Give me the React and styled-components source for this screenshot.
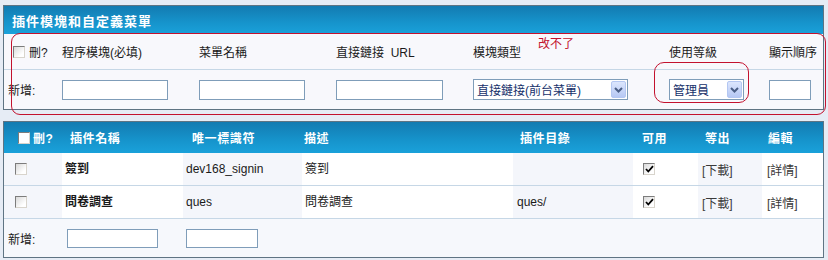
import React from 'react';
import styled, { createGlobalStyle } from 'styled-components';

const Global = createGlobalStyle`
  html, body { margin: 0; padding: 0; background: #e6ecf5; }
  body {
    font-family: "Liberation Sans", "Noto Sans CJK TC", sans-serif;
    font-size: 12px;
    color: #1a1a1a;
  }
`;

const Page = styled.div`
  width: 828px;
  height: 260px;
  box-sizing: border-box;
  padding: 5px 0 0 3px;
  overflow: hidden;
`;

const Annotated = styled.div`
  position: relative;
  width: 821px;
`;

const Panel = styled.div`
  width: 821px;
  box-sizing: border-box;
  border: 1px solid #5f7483;
  background: ${p => p.$bg || '#f8f8fc'};
  margin-top: ${p => p.$mt || 0}px;
`;

const TitleBar = styled.div`
  height: 28px;
  display: flex;
  align-items: center;
  padding-left: 8px;
  background: linear-gradient(#137bb1, #1694cc 60%, #1aa1da);
  color: #fff;
  font-weight: bold;
  font-size: 13px;
  letter-spacing: 1px;
`;

const Row = styled.div`
  display: grid;
  grid-template-columns: ${p => p.$cols};
  height: ${p => p.$h}px;
  border-bottom: ${p => (p.$line ? '1px solid #c6d7e6' : 'none')};
  background: ${p => p.$bg || 'transparent'};
`;

const HeadRow = styled(Row)`
  background: linear-gradient(#137bb1, #1694cc 60%, #1aa1da);
  color: #fff;
  font-weight: bold;
  letter-spacing: 0.6px;
`;

const Cell = styled.div`
  display: flex;
  align-items: center;
  gap: ${p => p.$gap || 0}px;
  padding-left: ${p => p.$pl || 0}px;
  padding-bottom: ${p => p.$pb || 0}px;
  background: ${p => (p.$shade ? '#f4f6fb' : 'transparent')};
  white-space: nowrap;
  overflow: visible;
  font-weight: ${p => (p.$bold ? 'bold' : 'inherit')};
  color: ${p => p.$color || 'inherit'};
`;

const TextInput = styled.div`
  width: ${p => p.$w}px;
  height: ${p => p.$h || 20}px;
  box-sizing: border-box;
  border: 1px solid #7f9db9;
  background: #fff;
`;

const SelectBox = styled.div`
  width: ${p => p.$w}px;
  height: 21px;
  box-sizing: border-box;
  border: 1px solid #7f9db9;
  background: #fff;
  display: flex;
  align-items: center;
  justify-content: space-between;
  padding: 1px 1px 1px 3px;
  color: #16306a;
`;

const ArrowBtn = styled.span`
  width: 15px;
  height: 17px;
  box-sizing: border-box;
  border: 1px solid #b4c7f2;
  border-radius: 2px;
  background: linear-gradient(#dce6fd, #b6c8f4);
  display: flex;
  align-items: center;
  justify-content: center;
`;

const Box = styled.span`
  display: inline-flex;
  align-items: center;
  justify-content: center;
  flex: none;
  width: ${p => p.$s || 12}px;
  height: ${p => p.$s || 12}px;
  box-sizing: border-box;
  border: 1px solid;
  border-color: #7c7c7c #d8d4cc #d8d4cc #7c7c7c;
  background: ${p => (p.$white ? '#fff' : 'linear-gradient(135deg, #d9d9d9, #fff 75%)')};
`;

const RedFrame = styled.div`
  position: absolute;
  left: ${p => p.$x}px;
  top: ${p => p.$y}px;
  width: ${p => p.$w}px;
  height: ${p => p.$h}px;
  box-sizing: border-box;
  border: 1px solid #c3122e;
  border-radius: ${p => p.$r}px;
  pointer-events: none;
`;

const RedNote = styled.div`
  position: absolute;
  left: 535px;
  top: 32px;
  line-height: 14px;
  color: #c3122e;
`;

const Link = styled.span`
  color: #3a3a3a;
`;

const Chevron = () => (
  <svg width="9" height="6" viewBox="0 0 9 6">
    <path d="M1 1 L4.5 4.5 L8 1" fill="none" stroke="#4a5e86" strokeWidth="2" />
  </svg>
);

const Tick = () => (
  <svg width="9" height="8" viewBox="0 0 9 8">
    <path d="M1 4 L3.3 6.5 L8 1.2" fill="none" stroke="#000" strokeWidth="1.8" />
  </svg>
);

const Select = ({ w, children }) => (
  <SelectBox $w={w}>
    <span>{children}</span>
    <ArrowBtn><Chevron /></ArrowBtn>
  </SelectBox>
);

const TOP = '58px 137px 137px 137px 196px 100px 54px';
const BOT = '58px 121px 119px 211px 120px 65px 64px 61px';

const plugins = [
  { name: '簽到', id: 'dev168_signin', desc: '簽到', dir: '' },
  { name: '問卷調查', id: 'ques', desc: '問卷調查', dir: 'ques/' },
];

export default function App() {
  return (
    <Page>
      <Global />
      <Annotated>
        <Panel>
          <TitleBar>插件模塊和自定義菜單</TitleBar>
          <Row $cols={TOP} $h={35} $line>
            <Cell $pl={9} $gap={4}><Box $s={12} />刪?</Cell>
            <Cell>程序模塊(必填)</Cell>
            <Cell>菜單名稱</Cell>
            <Cell>直接鏈接&nbsp;&nbsp;URL</Cell>
            <Cell>模塊類型</Cell>
            <Cell>使用等級</Cell>
            <Cell>顯示順序</Cell>
          </Row>
          <Row $cols={TOP} $h={39}>
            <Cell $pl={4}>新增:</Cell>
            <Cell><TextInput $w={106} /></Cell>
            <Cell><TextInput $w={106} /></Cell>
            <Cell><TextInput $w={107} /></Cell>
            <Cell><Select w={155}>直接鏈接(前台菜單)</Select></Cell>
            <Cell><Select w={75}>管理員</Select></Cell>
            <Cell><TextInput $w={42} /></Cell>
          </Row>
        </Panel>
        <RedNote>改不了</RedNote>
        <RedFrame $x={8} $y={28} $w={815} $h={82} $r={9} />
        <RedFrame $x={651} $y={57} $w={95} $h={41} $r={10} />
      </Annotated>

      <Panel $mt={11} $bg="#f6f8fc">
        <HeadRow $cols={BOT} $h={31}>
          <Cell $pl={14} $gap={3}><Box $s={12} $white />刪?</Cell>
          <Cell $pl={8}>插件名稱</Cell>
          <Cell $pl={9}>唯一標識符</Cell>
          <Cell $pl={2}>描述</Cell>
          <Cell $pl={7}>插件目錄</Cell>
          <Cell $pl={9}>可用</Cell>
          <Cell $pl={7}>等出</Cell>
          <Cell $pl={6}>編輯</Cell>
        </HeadRow>
        {plugins.map(p => (
          <Row key={p.id} $cols={BOT} $h={32} $line $bg="#fff">
            <Cell $shade $pl={11}><Box $s={12} /></Cell>
            <Cell $pl={3} $pb={3} $bold>{p.name}</Cell>
            <Cell $shade $pl={3}>{p.id}</Cell>
            <Cell $pl={3} $pb={3}>{p.desc}</Cell>
            <Cell $shade $pl={4}>{p.dir}</Cell>
            <Cell $pl={10}><Box $s={12}><Tick /></Box></Cell>
            <Cell $shade $pl={4}><Link>[下載]</Link></Cell>
            <Cell $pl={5}><Link>[詳情]</Link></Cell>
          </Row>
        ))}
        <Row $cols={BOT} $h={38}>
          <Cell $pl={4}>新增:</Cell>
          <Cell $pl={5}><TextInput $w={91} $h={19} /></Cell>
          <Cell $pl={3}><TextInput $w={72} $h={19} /></Cell>
          <Cell />
          <Cell />
          <Cell />
          <Cell />
          <Cell />
        </Row>
      </Panel>
    </Page>
  );
}
